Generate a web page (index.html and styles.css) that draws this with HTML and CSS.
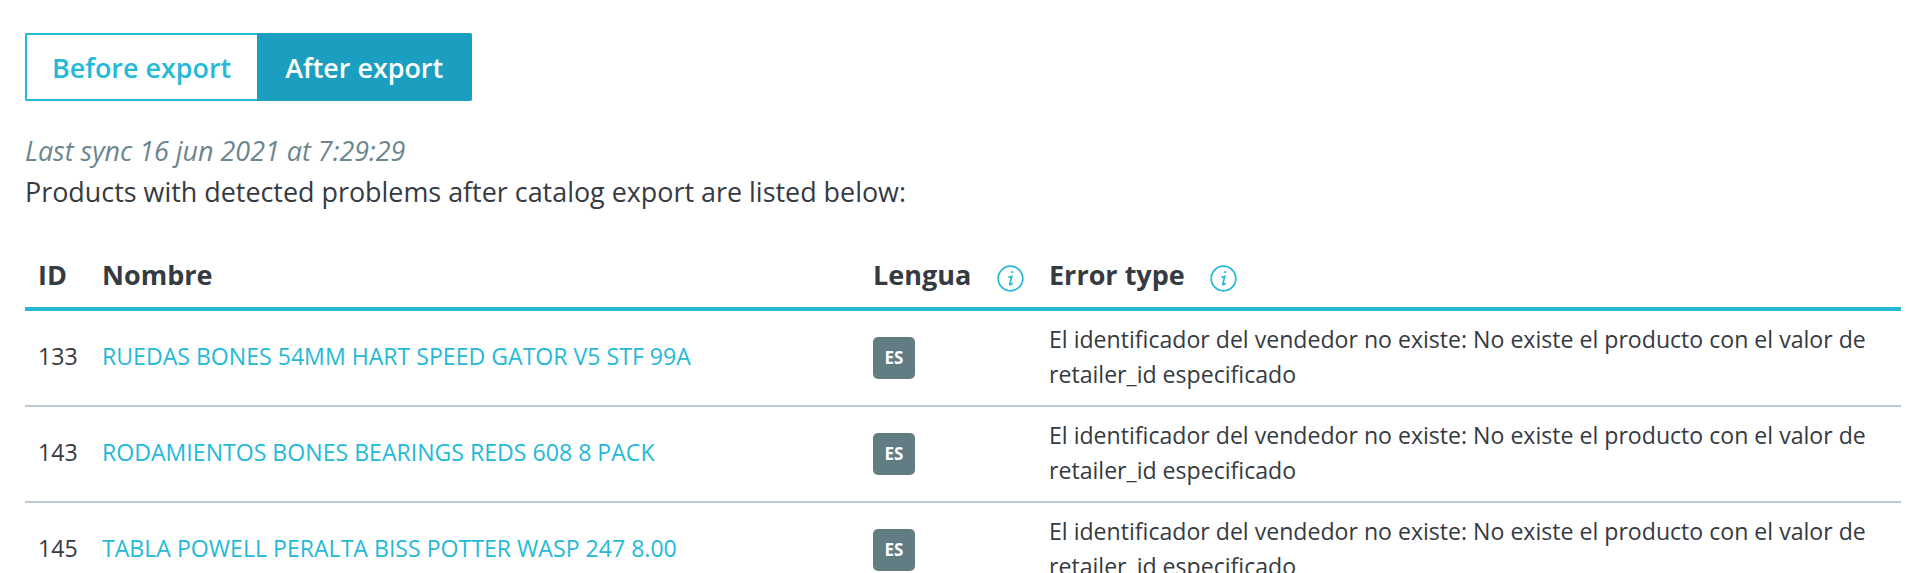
FILE: index.html
```html
<!DOCTYPE html>
<html>
<head>
  <meta charset="UTF-8">
  <title>Catalog export</title>
  <link rel="stylesheet" href="styles.css">
</head>
<body>
  <div class="tabs">
    <button class="tab">Before export</button>
    <button class="tab active">After export</button>
  </div>

  <div class="sync-date">Last sync 16 jun 2021 at 7:29:29</div>
  <div class="intro">Products with detected problems after catalog export are listed below:</div>

  <table class="report">
    <colgroup>
      <col class="col-id">
      <col class="col-name">
      <col class="col-lang">
      <col>
    </colgroup>
    <thead>
      <tr>
        <th>ID</th>
        <th>Nombre</th>
        <th>
          <div class="th-inner th-lang">Lengua
            <svg class="info" viewBox="0 0 27 27"><circle cx="13.5" cy="13.5" r="12.3"/><path class="dot" d="M15.2 6.2v1.7"/><path d="M11.4 12.3l3.4-.9-2 7.6q-.2 1.1 1 .5l2-1.2"/></svg>
          </div>
        </th>
        <th>
          <div class="th-inner th-error">Error type
            <svg class="info" viewBox="0 0 27 27"><circle cx="13.5" cy="13.5" r="12.3"/><path class="dot" d="M15.2 6.2v1.7"/><path d="M11.4 12.3l3.4-.9-2 7.6q-.2 1.1 1 .5l2-1.2"/></svg>
          </div>
        </th>
      </tr>
    </thead>
    <tbody>
      <tr>
        <td>133</td>
        <td><a href="#">RUEDAS BONES 54MM HART SPEED GATOR V5 STF 99A</a></td>
        <td><span class="badge">ES</span></td>
        <td>El identificador del vendedor no existe: No existe el producto con el valor de retailer_id especificado</td>
      </tr>
      <tr>
        <td>143</td>
        <td><a href="#">RODAMIENTOS BONES BEARINGS REDS 608 8 PACK</a></td>
        <td><span class="badge">ES</span></td>
        <td>El identificador del vendedor no existe: No existe el producto con el valor de retailer_id especificado</td>
      </tr>
      <tr>
        <td>145</td>
        <td><a href="#">TABLA POWELL PERALTA BISS POTTER WASP 247 8.00</a></td>
        <td><span class="badge">ES</span></td>
        <td>El identificador del vendedor no existe: No existe el producto con el valor de retailer_id especificado</td>
      </tr>
    </tbody>
  </table>
</body>
</html>
```

FILE: styles.css
```css
html, body {
  height: 573px;
  overflow: hidden;
}
body {
  margin: 0;
  padding: 33px 19px 0 25px;
  box-sizing: border-box;
  background-color: white;
  font-family: "Open Sans", sans-serif;
  color: #363a41;
}
.tabs {
  display: flex;
  margin-bottom: 29px;
}
.tab {
  height: 68px;
  padding: 0 26px 0 25px;
  font-family: inherit;
  font-size: 26.9px;
  font-weight: 600;
  color: #25b9d7;
  background-color: white;
  border: 2px solid #25b9d7;
  border-right: none;
  border-radius: 2px 0 0 2px;
}
.tab.active {
  padding: 0 29px 0 26px;
  color: white;
  background-color: #1a9fc0;
  border-color: #1a9fc0;
  border-right: none;
  border-radius: 0 2px 2px 0;
}
.sync-date {
  font-size: 26.9px;
  font-style: italic;
  line-height: 41px;
  color: #6c868e;
}
.intro {
  font-size: 26.9px;
  line-height: 42px;
  margin-bottom: 26px;
}
.report {
  width: 100%;
  border-collapse: collapse;
  table-layout: fixed;
}
.col-id { width: 77px; }
.col-name { width: 771px; }
.col-lang { width: 176px; }
th {
  height: 66px;
  padding: 2px 0 0;
  font-size: 27px;
  font-weight: 700;
  text-align: left;
  border-bottom: 4px solid #25b9d7;
}
th:first-child, td:first-child {
  padding-left: 13px;
}
.th-inner {
  display: flex;
  align-items: center;
}
.th-lang { gap: 26px; }
.th-error { gap: 25px; }
.info {
  width: 27px;
  height: 27px;
  margin-top: 9px;
  fill: none;
  stroke: #25b9d7;
  stroke-width: 1.7;
}
.info .dot {
  stroke-width: 2.2;
}
td {
  height: 91px;
  padding: 0 0 3px;
  font-size: 23.1px;
  line-height: 35px;
  border-bottom: 2px solid #bbcdd2;
}
td a {
  color: #25b9d7;
  text-decoration: none;
}
.badge {
  display: block;
  width: 42px;
  height: 42px;
  margin-top: 3px;
  line-height: 42px;
  text-align: center;
  font-size: 17px;
  font-weight: 700;
  color: white;
  background-color: #627c84;
  border-radius: 5px;
}
```
